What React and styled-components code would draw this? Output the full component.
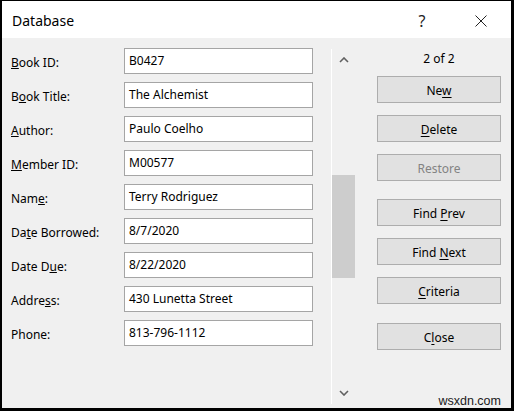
import React from "react";
import styled, { createGlobalStyle } from "styled-components";

const GlobalStyle = createGlobalStyle`
  html, body {
    margin: 0;
    padding: 0;
    background: #000;
  }
  * {
    box-sizing: border-box;
  }
`;

const Dialog = styled.div`
  width: 514px;
  height: 411px;
  display: flex;
  flex-direction: column;
  border-style: solid;
  border-color: #000;
  border-width: 1px 3px 3px 2px;
  background: #f0f0f0;
  font-family: "Noto Sans", "Open Sans", sans-serif;
  color: #000;
`;

const TitleBar = styled.div`
  height: 37px;
  flex: none;
  display: flex;
  align-items: center;
  background: #fff;
  padding-left: 10px;
`;

const Title = styled.div`
  flex: 1;
  font-size: 14px;
  padding-top: 2px;
`;

const TitleButton = styled.div`
  width: ${(p) => p.$w}px;
  margin-right: ${(p) => p.$after || 0}px;
  height: 37px;
  display: flex;
  align-items: center;
  justify-content: center;
  font-size: 16px;
  color: #222;
  padding-top: 2px;
`;

const Body = styled.div`
  flex: 1;
  display: flex;
  min-height: 0;
`;

const Form = styled.div`
  width: 329px;
  padding: 10px 0 0 9px;
  display: flex;
  flex-direction: column;
  gap: 8px;
`;

const Row = styled.div`
  display: flex;
  align-items: center;
  height: 26px;
`;

const Label = styled.label`
  width: 113px;
  font-size: 12px;
  padding-top: 2px;
`;

const Field = styled.div`
  width: 189px;
  height: 26px;
  background: #fff;
  border: 1px solid #a5a5a5;
  font-size: 12px;
  line-height: 23px;
  padding-left: 4px;
  white-space: nowrap;
`;

const Scroll = styled.div`
  width: 25px;
  margin: 11px 0 4px;
  border-left: 1px solid #fff;
  display: flex;
  flex-direction: column;
`;

const Arrow = styled.div`
  height: 24px;
  display: flex;
  align-items: ${(p) => (p.$down ? "flex-end" : "flex-start")};
  justify-content: center;
  padding: ${(p) => (p.$down ? "0 0 8px 0" : "8px 0 0 0")};
`;

const Track = styled.div`
  flex: 1;
`;

const Thumb = styled.div`
  margin-top: 102px;
  width: 23px;
  height: 103px;
  background: #cdcdcd;
`;

const Actions = styled.div`
  flex: 1;
  display: flex;
  flex-direction: column;
  align-items: center;
  padding: 12px 10px 0 21px;
`;

const Counter = styled.div`
  width: 124px;
  height: 18px;
  line-height: 18px;
  text-align: center;
  font-size: 12px;
  margin-bottom: 8px;
`;

const Button = styled.div`
  width: 124px;
  height: 27px;
  flex: none;
  margin-top: ${(p) => p.$gap}px;
  display: flex;
  align-items: center;
  justify-content: center;
  background: #e1e1e1;
  border: 1px solid #adadad;
  font-size: 12px;
  padding-top: 1px;
  color: ${(p) => (p.$disabled ? "#838383" : "#000")};

  u {
    text-underline-offset: 2px;
  }
`;

const Mark = styled.div`
  margin-top: auto;
  align-self: flex-end;
  font-size: 12.5px;
  color: #1a1a1a;
  font-family: "Liberation Sans", Arial, sans-serif;
`;

const Chevron = ({ down }) => (
  <svg width="10" height="6" viewBox="0 0 10 6">
    <path
      d={down ? "M1 1 L5 5 L9 1" : "M1 5 L5 1 L9 5"}
      fill="none"
      stroke="#606060"
      strokeWidth="1.6"
    />
  </svg>
);

const fields = [
  [<><u>B</u>ook ID:</>, "B0427"],
  [<>B<u>o</u>ok Title:</>, "The Alchemist"],
  [<><u>A</u>uthor:</>, "Paulo Coelho"],
  [<><u>M</u>ember ID:</>, "M00577"],
  [<>Nam<u>e</u>:</>, "Terry Rodriguez"],
  [<>Da<u>t</u>e Borrowed:</>, "8/7/2020"],
  [<>Date D<u>u</u>e:</>, "8/22/2020"],
  [<>Addre<u>s</u>s:</>, "430 Lunetta Street"],
  [<>Phone:</>, "813-796-1112"],
];

const buttons = [
  { label: <>Ne<u>w</u></>, gap: 0 },
  { label: <><u>D</u>elete</>, gap: 12 },
  { label: <>Restore</>, gap: 12, disabled: true },
  { label: <>Find <u>P</u>rev</>, gap: 18 },
  { label: <>Find <u>N</u>ext</>, gap: 12 },
  { label: <><u>C</u>riteria</>, gap: 12 },
  { label: <>C<u>l</u>ose</>, gap: 19 },
];

export default function App() {
  return (
    <>
      <GlobalStyle />
      <Dialog>
        <TitleBar>
          <Title>Database</Title>
          <TitleButton $w={36} $after={23}>?</TitleButton>
          <TitleButton $w={36} $after={12}>
            <svg width="12" height="12" viewBox="0 0 12 12">
              <path d="M0.5 0.5 L11.5 11.5 M11.5 0.5 L0.5 11.5" stroke="#222" strokeWidth="1" />
            </svg>
          </TitleButton>
        </TitleBar>
        <Body>
          <Form>
            {fields.map(([label, value], i) => (
              <Row key={i}>
                <Label>{label}</Label>
                <Field>{value}</Field>
              </Row>
            ))}
          </Form>
          <Scroll>
            <Arrow>
              <Chevron />
            </Arrow>
            <Track>
              <Thumb />
            </Track>
            <Arrow $down>
              <Chevron down />
            </Arrow>
          </Scroll>
          <Actions>
            <Counter>2 of 2</Counter>
            {buttons.map((b, i) => (
              <Button key={i} $gap={b.gap} $disabled={b.disabled}>
                <span>{b.label}</span>
              </Button>
            ))}
            <Mark>wsxdn.com</Mark>
          </Actions>
        </Body>
      </Dialog>
    </>
  );
}
